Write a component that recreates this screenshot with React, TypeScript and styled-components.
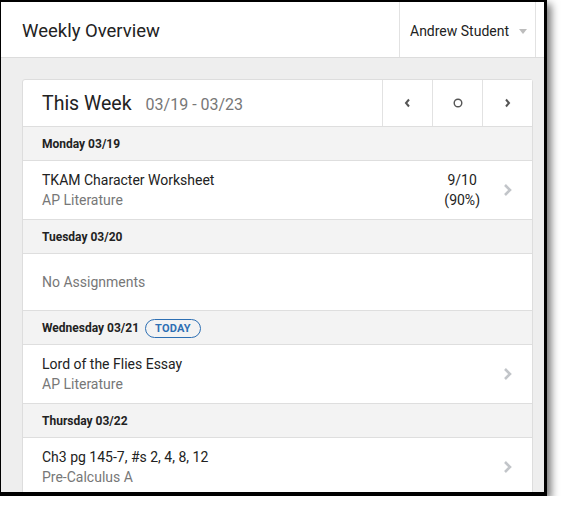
import { createGlobalStyle } from 'styled-components'
import styled from 'styled-components'

const GlobalStyle = createGlobalStyle`
  html, body {
    margin: 0;
    padding: 0;
    background: #ffffff;
  }
  body {
    font-family: Roboto, "Liberation Sans", Arial, sans-serif;
    color: #333;
  }
`

const Frame = styled.div`
  width: 543px;
  height: 490px;
  border-style: solid;
  border-color: #000;
  border-width: 2px 3px 4px 1px;
  box-shadow: 4px 4px 8px rgba(0, 0, 0, 0.55);
  overflow: hidden;
  background: #eeeeee;
  display: flex;
  flex-direction: column;
`

const TopBar = styled.header`
  height: 55px;
  flex: none;
  background: #fff;
  border-bottom: 1px solid #dcdcdc;
  display: flex;
  align-items: stretch;
`

const PageTitle = styled.h1`
  flex: 1;
  margin: 0;
  padding: 3px 0 0 21px;
  display: flex;
  align-items: center;
  font-size: 18.5px;
  font-weight: 400;
  color: #222;
`

const UserMenu = styled.div`
  width: 137px;
  margin-right: 8px;
  border-left: 1px solid #e2e2e2;
  border-right: 1px solid #e2e2e2;
  display: flex;
  align-items: center;
  gap: 10px;
  padding: 3px 0 0 10px;
  box-sizing: border-box;
  font-size: 14px;
  color: #222;
`

const Caret = styled.span`
  width: 0;
  height: 0;
  border-left: 4.5px solid transparent;
  border-right: 4.5px solid transparent;
  border-top: 5px solid #bdbdbd;
`

const Body = styled.div`
  padding: 21px 11px 0 21px;
`

const Card = styled.section`
  background: #fff;
  border: 1px solid #dddddd;
  border-radius: 3px;
`

const CardHead = styled.div`
  height: 46px;
  display: flex;
  align-items: stretch;
  border-bottom: 1px solid #dedede;
`

const WeekTitle = styled.div`
  flex: 1;
  display: flex;
  align-items: center;
  gap: 14px;
  padding-left: 19px;
`

const WeekLabel = styled.span`
  font-size: 19.5px;
  color: #222;
`

const WeekRange = styled.span`
  font-size: 16px;
  color: #777;
  padding-top: 2px;
`

const NavButton = styled.button`
  width: 50px;
  border: none;
  border-left: 1px solid #e2e2e2;
  background: #fff;
  padding: 0;
  display: flex;
  align-items: center;
  justify-content: center;
  color: #555;
`

const DayHeader = styled.div`
  height: 34px;
  box-sizing: border-box;
  background: #f3f3f3;
  border-bottom: 1px solid #dedede;
  display: flex;
  align-items: center;
  gap: 6px;
  padding: 1px 0 0 19px;
  font-size: 12px;
  font-weight: 700;
  color: #222;
`

const TodayPill = styled.span`
  border: 1px solid #2d6fb3;
  border-radius: 10px;
  color: #2d6fb3;
  font-size: 11px;
  font-weight: 700;
  letter-spacing: 0.2px;
  height: 17px;
  line-height: 17px;
  padding: 0 9px;
`

const ItemRow = styled.div<{ $empty?: boolean }>`
  min-height: ${(p) => (p.$empty ? '57px' : '58px')};
  box-sizing: border-box;
  padding: ${(p) => (p.$empty ? '0 19px' : '9px 19px 9px')};
  border-bottom: 1px solid #dedede;
  display: flex;
  align-items: center;
  font-size: 14px;
`

const ItemText = styled.div`
  flex: 1;
  line-height: 20px;
`

const ItemTitle = styled.div`
  color: #222;
`

const ItemCourse = styled.div`
  color: #777;
`

const Empty = styled.div`
  color: #777;
  font-size: 14px;
`

const Score = styled.div`
  text-align: center;
  line-height: 20px;
  color: #222;
  margin-right: 23px;
`

const Chevron = () => (
  <svg width="10" height="14" viewBox="0 0 10 14">
    <path d="M2 2 L7 7 L2 12" fill="none" stroke="#c2c5c9" strokeWidth="2.6" />
  </svg>
)

const SmallChevron = ({ dir }: { dir: 'left' | 'right' }) => (
  <svg width="7" height="10" viewBox="0 0 7 10">
    <path
      d={dir === 'left' ? 'M5 1.5 L2 5 L5 8.5' : 'M2 1.5 L5 5 L2 8.5'}
      fill="none"
      stroke="#555"
      strokeWidth="2"
    />
  </svg>
)

const Dot = () => (
  <svg width="10" height="10" viewBox="0 0 10 10">
    <circle cx="5" cy="5" r="3.8" fill="none" stroke="#555" strokeWidth="1.4" />
  </svg>
)

type Item = { title: string; course: string; score?: [string, string] }
type Day = { label: string; today?: boolean; items: Item[] }

const days: Day[] = [
  {
    label: 'Monday 03/19',
    items: [{ title: 'TKAM Character Worksheet', course: 'AP Literature', score: ['9/10', '(90%)'] }],
  },
  { label: 'Tuesday 03/20', items: [] },
  {
    label: 'Wednesday 03/21',
    today: true,
    items: [{ title: 'Lord of the Flies Essay', course: 'AP Literature' }],
  },
  {
    label: 'Thursday 03/22',
    items: [{ title: 'Ch3 pg 145-7, #s 2, 4, 8, 12', course: 'Pre-Calculus A' }],
  },
]

export default function App() {
  return (
    <>
      <GlobalStyle />
      <Frame>
        <TopBar>
          <PageTitle>Weekly Overview</PageTitle>
          <UserMenu>
            Andrew Student
            <Caret />
          </UserMenu>
        </TopBar>
        <Body>
          <Card>
            <CardHead>
              <WeekTitle>
                <WeekLabel>This Week</WeekLabel>
                <WeekRange>03/19 - 03/23</WeekRange>
              </WeekTitle>
              <NavButton aria-label="Previous week">
                <SmallChevron dir="left" />
              </NavButton>
              <NavButton aria-label="Current week">
                <Dot />
              </NavButton>
              <NavButton aria-label="Next week">
                <SmallChevron dir="right" />
              </NavButton>
            </CardHead>
            {days.map((day) => (
              <div key={day.label}>
                <DayHeader>
                  {day.label}
                  {day.today && <TodayPill>TODAY</TodayPill>}
                </DayHeader>
                {day.items.length === 0 ? (
                  <ItemRow $empty>
                    <Empty>No Assignments</Empty>
                  </ItemRow>
                ) : (
                  day.items.map((item) => (
                    <ItemRow key={item.title}>
                      <ItemText>
                        <ItemTitle>{item.title}</ItemTitle>
                        <ItemCourse>{item.course}</ItemCourse>
                      </ItemText>
                      {item.score && (
                        <Score>
                          {item.score[0]}
                          <br />
                          {item.score[1]}
                        </Score>
                      )}
                      <Chevron />
                    </ItemRow>
                  ))
                )}
              </div>
            ))}
          </Card>
        </Body>
      </Frame>
    </>
  )
}
